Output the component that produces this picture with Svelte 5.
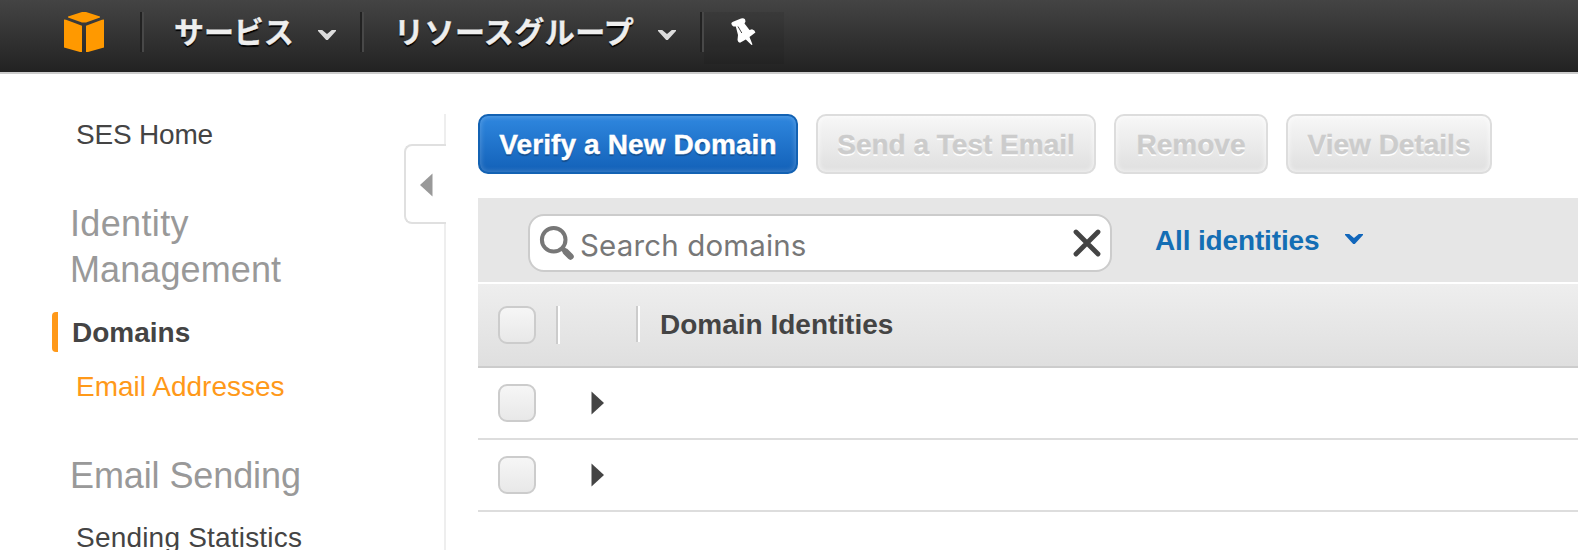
<script>
  const actions = [
    { label: 'Verify a New Domain', width: 320, primary: true },
    { label: 'Send a Test Email', width: 280 },
    { label: 'Remove', width: 154 },
    { label: 'View Details', width: 206 }
  ];
  const rows = [1, 2];
</script>

{#snippet chevron()}
  <svg class="chev" width="20" height="12" viewBox="0 0 20 12"><path d="M1 1h4.200L10 5 14.800 1H19v1L10.800 11H9.200L1 2z" fill="currentColor" /></svg>
{/snippet}

<div class="page">
  <header>
    <svg class="logo" width="40" height="40" viewBox="0 0 40 40" fill="#ff9900">
      <path d="M18 0h4L36 4.500v1L22 10.500h-4L4 5.500v-1zM0 7.500l2 .3 16 6V40h-2L0 35.500zM40 7.500l-2 .3-16 6V40h2l16-4.500z" />
    </svg>
    <i class="sep"></i>
    <div class="nav services"><span>サービス</span>{@render chevron()}</div>
    <i class="sep"></i>
    <div class="nav groups"><span>リソースグループ</span>{@render chevron()}</div>
    <i class="sep"></i>
    <div class="pin">
      <svg width="25" height="28" viewBox="0 0 25 28" fill="#fff">
        <path d="M.3 5.500Q.5 4.500 2 3.800L10 .4Q13 0 14 1.200L14.500 3.500 13.500 5.500 18.500 12 21 11.200Q24 12 24.400 14.500L18.500 19 21.500 26.500 20.500 27 14.800 21.500 9 24.800Q7 24.500 6.500 22L7 17 4.800 8.600 2.500 8.400Q.6 7.500.3 5.500z" />
        <path d="M7 8.500 10.800 15" stroke="#444" stroke-width="1" />
      </svg>
    </div>
  </header>

  <div class="body">
    <nav class="side">
      <a class="item home" href="#home">SES Home</a>
      <h2 class="identity"><span>Identity</span><br />Management</h2>
      <a class="item active" href="#domains">Domains</a>
      <a class="item orange" href="#emails">Email Addresses</a>
      <h2 class="sending">Email Sending</h2>
      <a class="item stats" href="#stats">Sending Statistics</a>
    </nav>
    <div class="divider">
      <div class="stub"></div>
      <div class="tab"><svg width="13" height="24" viewBox="0 0 13 24"><path d="M0 12 12.500.5v23z" fill="#999" /></svg></div>
      <div class="rest"></div>
    </div>
    <main>
      <div class="actions">
        {#each actions as a}
          <button class:primary={a.primary} style="width:{a.width}px">{a.label}</button>
        {/each}
      </div>
      <div class="toolbar">
        <div class="search">
          <svg width="36" height="36" viewBox="0 0 36 36" fill="none" stroke="#777">
            <circle cx="14.700" cy="14.800" r="11.800" stroke-width="4" />
            <path d="m23 23 4 4" stroke-width="5" />
            <path d="m27 27 4.500 4.500" stroke-width="6.500" stroke-linecap="round" />
          </svg>
          <span>Search domains</span>
          <svg class="clear" width="28" height="28" viewBox="0 0 28 28"><path d="m3 3 22 22M25 3 3 25" stroke="#444" stroke-width="4.800" stroke-linecap="round" /></svg>
        </div>
        <div class="filter"><span>All identities</span>{@render chevron()}</div>
      </div>
      <div class="thead">
        <i class="check"></i>
        <i class="tick first"></i>
        <i class="tick"></i>
        <b>Domain Identities</b>
      </div>
      {#each rows as r}
        <div class="row">
          <i class="check"></i>
          <svg width="13" height="24" viewBox="0 0 13 24"><path d="M.5.500 13 12 .5 23.500z" fill="#444" /></svg>
        </div>
      {/each}
    </main>
  </div>
</div>

<style>
  :global(body) { margin: 0; background: #fff; overflow: hidden; }
  .page { box-sizing: border-box; width: 1578px; height: 550px; overflow: hidden; font-family: "Liberation Sans", Arial, sans-serif; color: #444; font-size: 28px; }
  svg { display: block; flex: none; }
  header { display: flex; align-items: flex-start; box-sizing: border-box; height: 74px; padding: 12px 0 0 64px; background: linear-gradient(#444, #222); background-clip: padding-box; border-bottom: 2px solid #ccc; }
  .logo { margin-right: 36px; }
  .sep { flex: none; width: 2px; height: 40px; background: #222; border-right: 2px solid #484848; }
  .nav { display: flex; box-sizing: border-box; color: #eee; font: bold 30px/36px "Noto Sans CJK JP", sans-serif; -webkit-text-stroke: .4px #eee; text-shadow: 0 2px 1px #000; white-space: nowrap; }
  .nav .chev { margin-top: 17px; color: #ddd; }
  .services { width: 216px; padding-left: 30px; }
  .services span { width: 143px; letter-spacing: -.1px; }
  .groups { width: 336px; padding-left: 30px; }
  .groups span { width: 263px; letter-spacing: .45px; }
  .pin { width: 80px; height: 52px; background: #0001; padding: 6px 0 0 27px; box-sizing: border-box; }
  .body { display: flex; height: 476px; }
  .side { box-sizing: border-box; width: 404px; padding: 45px 0 0 52px; }
  .item { display: block; height: 32px; padding-left: 24px; line-height: 32px; color: #444; text-decoration: none; white-space: nowrap; }
  .home { letter-spacing: -.2px; }
  .stats { letter-spacing: .2px; }
  h2 { margin: 0; padding-left: 18px; font-weight: 400; font-size: 36px; line-height: 46px; color: #999; }
  .identity { margin-top: 50px; letter-spacing: .1px; }
  .identity span { letter-spacing: .35px; }
  .active { box-sizing: border-box; height: 40px; margin-top: 19px; padding-left: 14px; border-left: 6px solid #ff9919; border-radius: 4px 0 0 4px; line-height: 41px; font-weight: bold; }
  .orange { margin-top: 19px; color: #ff9919; }
  .sending { margin: 50px 0 23px; letter-spacing: -.1px; }
  .divider { display: flex; flex-direction: column; align-items: flex-end; width: 42px; padding-top: 40px; }
  .stub { width: 2px; height: 30px; background: #eee; }
  .tab { display: flex; align-items: center; box-sizing: border-box; width: 42px; height: 80px; padding: 2px 0 0 14px; border: 2px solid #e0e0e0; border-right: 0; border-radius: 8px 0 0 8px; }
  .rest { flex: 1; width: 2px; background: #eee; }
  main { flex: 1; padding: 40px 0 0 32px; }
  .actions { display: flex; gap: 18px; height: 84px; }
  button { box-sizing: border-box; height: 60px; padding: 1px 0 0; border: 2px solid #ddd; border-radius: 10px; background: linear-gradient(#f7f7f7, #dfdfdf); box-shadow: inset 0 0 5px 1px #fff9; color: #ccc; font: bold 28px/55px "Liberation Sans", Arial, sans-serif; -webkit-text-stroke: .4px currentColor; text-shadow: 0 2px 0 #fff; white-space: nowrap; }
  .primary { border-color: #1362b3; background: linear-gradient(#2f87df, #1361b8); box-shadow: inset 0 0 5px 1px #fff3; color: #fff; text-shadow: 0 2px 1px #0004; letter-spacing: .1px; }
  .toolbar { display: flex; align-items: flex-start; box-sizing: border-box; height: 84px; padding: 16px 0 0 50px; background: #e6e6e6; }
  .search { display: flex; align-items: center; box-sizing: border-box; width: 584px; height: 58px; padding: 0 9px 0 9px; border: 2px solid #ccc; border-radius: 16px; background: #fff; color: #777; font: 29.500px/54px Inter, sans-serif; letter-spacing: .15px; }
  .search span { margin-left: 5px; padding-top: 3px; }
  .clear { margin-left: auto; }
  .filter { display: flex; padding-left: 43px; margin-top: 11px; line-height: 32px; font-weight: bold; color: #146eb4; }
  .filter span { letter-spacing: -.15px; }
  .filter .chev { margin: 8px 0 0 25px; color: #1166bb; }
  .thead { display: flex; align-items: flex-start; box-sizing: border-box; height: 86px; padding: 22px 0 0 20px; border-top: 2px solid #fff; border-bottom: 2px solid #ccc; background: linear-gradient(#eee, #dfdfdf); background-clip: padding-box; }
  .check { flex: none; box-sizing: border-box; width: 38px; height: 38px; border: 2px solid #ccc; border-radius: 9px; background: linear-gradient(#f6f6f6, #e8e8e8); }
  .tick { flex: none; width: 2px; height: 36px; background: #ccc; border-right: 2px solid #fff; }
  .first { height: 38px; margin: 0 76px 0 20px; }
  .thead b { margin-left: 20px; line-height: 37px; }
  .row { display: flex; align-items: center; box-sizing: border-box; height: 72px; padding-left: 20px; border-bottom: 2px solid #ddd; }
  .row svg { margin-left: 55px; }
</style>
